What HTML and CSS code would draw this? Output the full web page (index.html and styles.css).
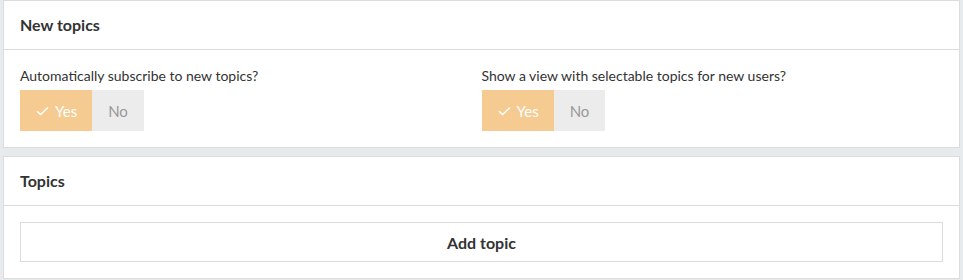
FILE: index.html
```html
<!DOCTYPE html>
<html lang="en">
    <head>
        <meta charset="UTF-8" />
        <title>Topics settings</title>
        <link rel="stylesheet" href="styles.css">
    </head>
    <body>
        <div class="page">
            <!-- New topics card -->
            <div class="card">
                <div class="card-header">New topics</div>
                <div class="card-body options">
                    <div class="option">
                        <div class="option-label">Automatically subscribe to new topics?</div>
                        <div class="toggle">
                            <button class="toggle-btn active">
                                <svg width="13" height="10" viewBox="0 0 13 10"><path d="M1 5.2 L4.6 8.6 L12 1.4" fill="none" stroke="#fff" stroke-width="1.4"/></svg>
                                Yes
                            </button>
                            <button class="toggle-btn">No</button>
                        </div>
                    </div>
                    <div class="option">
                        <div class="option-label">Show a view with selectable topics for new users?</div>
                        <div class="toggle">
                            <button class="toggle-btn active">
                                <svg width="13" height="10" viewBox="0 0 13 10"><path d="M1 5.2 L4.6 8.6 L12 1.4" fill="none" stroke="#fff" stroke-width="1.4"/></svg>
                                Yes
                            </button>
                            <button class="toggle-btn">No</button>
                        </div>
                    </div>
                </div>
            </div>
            <!-- Topics card -->
            <div class="card">
                <div class="card-header">Topics</div>
                <div class="card-body">
                    <button class="add-button">Add topic</button>
                </div>
            </div>
        </div>
    </body>
</html>
```

FILE: styles.css
```css
* {
    margin: 0;
    padding: 0;
    box-sizing: border-box;
}
body {
    background-color: #e8ebee;
    font-family: Lato, "Liberation Sans", sans-serif;
    color: #333;
}
.page {
    padding: 0 3px;
    display: flex;
    flex-direction: column;
    gap: 8px;
}
/* Cards */
.card {
    background-color: white;
    border: 1px solid #dcdcdc;
}
.card-header {
    height: 49px;
    line-height: 48px;
    padding: 0 16px;
    font-size: 16px;
    font-weight: bold;
    border-bottom: 1px solid #dcdcdc;
}
.card-body {
    padding: 16px;
}
.options {
    display: grid;
    grid-template-columns: 1fr 1fr;
}
.option-label {
    font-size: 14px;
    line-height: 20px;
    margin-bottom: 4px;
}
/* Yes / No toggle */
.toggle {
    display: flex;
}
.toggle-btn {
    height: 41px;
    padding: 0 16px;
    border: none;
    background-color: #ececec;
    color: #999;
    font-family: inherit;
    font-size: 15px;
    display: flex;
    align-items: center;
    gap: 6px;
}
.toggle-btn.active {
    background-color: #f5cb91;
    color: white;
    padding: 0 15px 0 16px;
}
/* Add topic button */
.add-button {
    width: 100%;
    height: 40px;
    background-color: white;
    border: 1px solid #dcdcdc;
    font-family: inherit;
    font-size: 16px;
    font-weight: bold;
    color: #333;
}
```
